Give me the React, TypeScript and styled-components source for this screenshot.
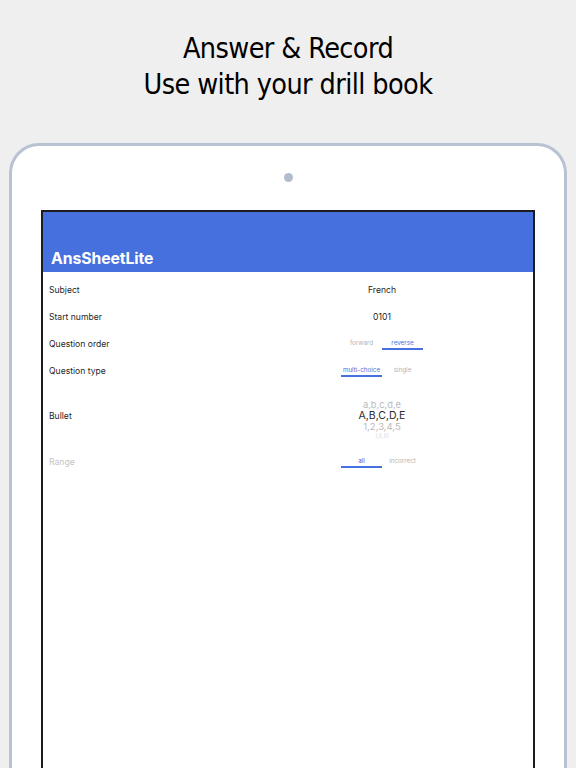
import React from 'react';
import styled, { createGlobalStyle } from 'styled-components';

const GlobalStyle = createGlobalStyle`
  html, body {
    margin: 0;
    padding: 0;
    background: #efefef;
  }
  body {
    font-family: 'Inter', 'Roboto', sans-serif;
    overflow: hidden;
  }
`;

const Page = styled.div`
  width: 576px;
  height: 768px;
  display: flex;
  flex-direction: column;
  align-items: center;
  padding-top: 31px;
  box-sizing: border-box;
  overflow: hidden;
`;

const Heading = styled.h1`
  margin: 0;
  font-family: 'DejaVu Sans Condensed', 'DejaVu Sans', sans-serif;
  font-weight: normal;
  font-size: 28.5px;
  line-height: 36px;
  letter-spacing: -0.6px;
  color: #000;
  text-align: center;
`;

const Device = styled.div`
  margin-top: 40px;
  width: 558px;
  flex: 1;
  box-sizing: border-box;
  background: #fff;
  border: 3px solid #b9c2d3;
  border-bottom: none;
  border-radius: 30px 30px 0 0;
  display: flex;
  flex-direction: column;
  align-items: center;
`;

const Camera = styled.div`
  margin-top: 27px;
  width: 9px;
  height: 9px;
  border-radius: 50%;
  background: #b3bccc;
`;

const Screen = styled.div`
  margin-top: 28px;
  width: 494px;
  flex: 1;
  box-sizing: border-box;
  border: 2px solid #1c1c1c;
  border-bottom: none;
  background: #fff;
`;

const NavBar = styled.div`
  height: 60px;
  background: #4670de;
  display: flex;
  align-items: flex-end;
  padding: 0 0 3px 8px;
  box-sizing: border-box;
`;

const AppTitle = styled.div`
  color: #fff;
  font-weight: 700;
  font-size: 15.8px;
  line-height: 20px;
  letter-spacing: -0.1px;
`;

const Form = styled.div`
  padding-top: 4px;
`;

const Row = styled.div<{ $height?: number }>`
  display: grid;
  grid-template-columns: 188px 1fr;
  align-items: center;
  height: ${(p) => p.$height ?? 27}px;
`;

const Label = styled.div<{ $muted?: boolean }>`
  padding-left: 6px;
  font-size: 8.6px;
  color: ${(p) => (p.$muted ? '#c4c4c4' : '#1f1f1f')};
`;

const Value = styled.div`
  display: flex;
  justify-content: center;
  font-size: 8.6px;
  color: #1f1f1f;
`;

const Segments = styled.div`
  display: flex;
`;

const Segment = styled.div<{ $active?: boolean }>`
  width: 41px;
  height: 13px;
  box-sizing: border-box;
  display: flex;
  align-items: center;
  justify-content: center;
  font-size: 6.3px;
  color: ${(p) => (p.$active ? '#4670de' : '#b4b4b4')};
  border-bottom: 2px solid ${(p) => (p.$active ? '#4670de' : 'transparent')};
  padding-top: 1px;
`;

const Picker = styled.div`
  display: flex;
  flex-direction: column;
  align-items: center;
  padding-top: 7px;
`;

const PickerItem = styled.div<{ $size: number; $color: string; $lh: number }>`
  font-size: ${(p) => p.$size}px;
  line-height: ${(p) => p.$lh}px;
  color: ${(p) => p.$color};
  white-space: nowrap;
`;

const SegmentControl = ({ options, active }: { options: string[]; active: number }) => (
  <Segments>
    {options.map((o, i) => (
      <Segment key={o} $active={i === active}>
        {o}
      </Segment>
    ))}
  </Segments>
);

const App = () => (
  <>
    <GlobalStyle />
    <Page>
      <Heading>
        Answer &amp; Record
        <br />
        Use with your drill book
      </Heading>
      <Device>
        <Camera />
        <Screen>
          <NavBar>
            <AppTitle>AnsSheetLite</AppTitle>
          </NavBar>
          <Form>
            <Row>
              <Label>Subject</Label>
              <Value>French</Value>
            </Row>
            <Row>
              <Label>Start number</Label>
              <Value>0101</Value>
            </Row>
            <Row>
              <Label>Question order</Label>
              <Value>
                <SegmentControl options={['forward', 'reverse']} active={1} />
              </Value>
            </Row>
            <Row>
              <Label>Question type</Label>
              <Value>
                <SegmentControl options={['multi-choice', 'single']} active={0} />
              </Value>
            </Row>
            <Row $height={64}>
              <Label>Bullet</Label>
              <Value>
                <Picker>
                  <PickerItem $size={9.3} $lh={11} $color="#b9b9b9">a,b,c,d,e</PickerItem>
                  <PickerItem $size={10.5} $lh={11} $color="#2a2a2a">A,B,C,D,E</PickerItem>
                  <PickerItem $size={9.5} $lh={11} $color="#b9b9b9">1,2,3,4,5</PickerItem>
                  <PickerItem $size={6} $lh={8} $color="#e0e0e0">I,II,III</PickerItem>
                </Picker>
              </Value>
            </Row>
            <Row>
              <Label $muted>Range</Label>
              <Value>
                <SegmentControl options={['all', 'incorrect']} active={0} />
              </Value>
            </Row>
          </Form>
        </Screen>
      </Device>
    </Page>
  </>
);

export default App;
